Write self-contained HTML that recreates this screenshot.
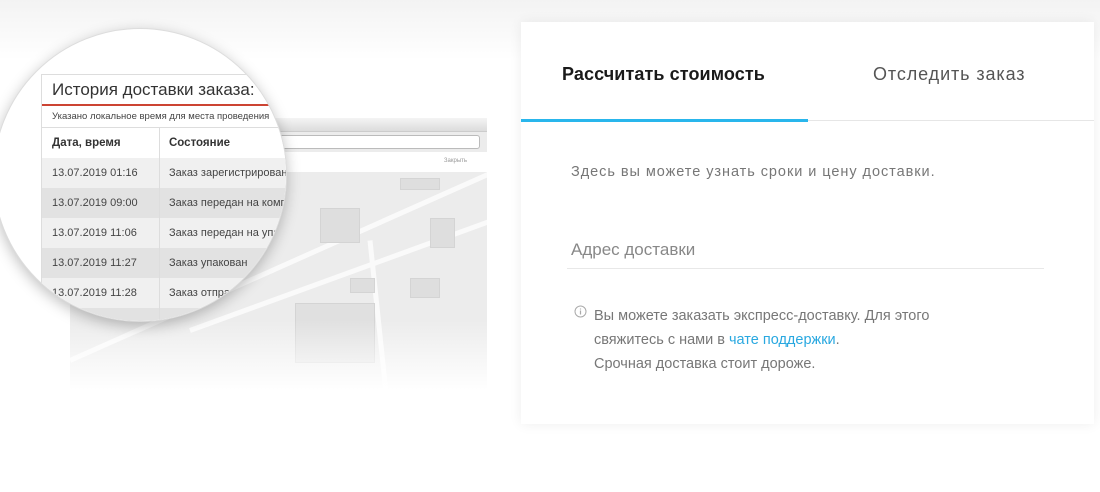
<!DOCTYPE html>
<html><head><meta charset="utf-8"><style>
*{margin:0;padding:0;box-sizing:border-box}
body{width:1100px;height:492px;overflow:hidden;background:linear-gradient(#f3f3f3 0,#fff 60px);font-family:"Liberation Sans","Noto Sans CJK SC",sans-serif;position:relative}
.map{position:absolute;left:70px;top:118px;width:417px;height:272px;background:#ececec;overflow:hidden}
.map .bar{height:14px;background:linear-gradient(#f4f4f4,#dcdcdc);border-bottom:1px solid #ccc}
.map .url{position:absolute;left:150px;top:17px;width:260px;height:14px;border:1px solid #bbb;border-radius:3px;background:#fff}
.map .top{position:absolute;left:0;top:34px;width:100%;height:20px;background:#fff;font-size:6px;color:#999;text-align:right;padding:6px 20px}
.map .fade{position:absolute;left:0;bottom:0;width:100%;height:70px;background:linear-gradient(rgba(255,255,255,0),#fff)}
.blk{position:absolute;background:#dedede;border:1px solid #d4d4d4}
.road{position:absolute;background:#fafafa;height:5px;transform-origin:left center}
.lens{position:absolute;left:-7px;top:28px;width:294px;height:294px;border-radius:50%;background:#fff;overflow:hidden;box-shadow:0 4px 14px rgba(0,0,0,.25);border:1px solid #ddd}
.tbl{position:absolute;left:47px;top:45px;width:300px;border:1px solid #ddd;background:#fff;font-size:11px;color:#444}
.tbl h3{font-weight:normal;font-size:17px;color:#333;padding:5px 10px 4px;border-bottom:2px solid #c43;white-space:nowrap}
.tbl .sub{font-size:9.5px;padding:5px 10px;border-bottom:1px solid #ddd;white-space:nowrap}
.row{display:flex;height:30px;align-items:center;white-space:nowrap}
.row div:first-child{width:118px;padding-left:10px;border-right:1px solid #ddd;height:100%;display:flex;align-items:center}
.row div:last-child{padding-left:9px}
.hd{font-weight:bold;font-size:11.5px;color:#333}
.g{background:#e2e2e2}.l{background:#f0f0f0}
.card{position:absolute;left:521px;top:22px;width:573px;height:402px;background:#fff;box-shadow:0 0 12px rgba(0,0,0,.07)}
.tab{position:absolute;top:42px;font-size:18px;color:#222}
.line{position:absolute;top:98px;left:0;width:100%;height:1px;background:#e6e6e6}
.blue{position:absolute;top:97px;left:0;width:287px;height:3px;background:#29b6ec}
.t{position:absolute;left:50px;font-size:14.5px;color:#777}
</style></head><body>
<div class="map">
<div class="bar"></div><div class="url"></div><div class="top">Закрыть</div>
<div class="road" style="left:0;top:240px;width:500px;transform:rotate(-24deg)"></div>
<div class="road" style="left:120px;top:210px;width:400px;transform:rotate(-20deg)"></div>
<div class="road" style="left:300px;top:120px;width:200px;transform:rotate(84deg)"></div>
<div class="blk" style="left:250px;top:90px;width:40px;height:35px"></div>
<div class="blk" style="left:225px;top:185px;width:80px;height:60px;background:#e0e0e0"></div>
<div class="blk" style="left:340px;top:160px;width:30px;height:20px"></div>
<div class="blk" style="left:360px;top:100px;width:25px;height:30px"></div>
<div class="blk" style="left:330px;top:60px;width:40px;height:12px"></div>
<div class="blk" style="left:280px;top:160px;width:25px;height:15px"></div>
<div class="fade"></div>
</div>
<div class="lens"><div class="tbl">
<h3>История доставки заказа:</h3>
<div class="sub">Указано локальное время для места проведения</div>
<div class="row hd"><div>Дата, время</div><div>Состояние</div></div>
<div class="row l"><div>13.07.2019 01:16</div><div>Заказ зарегистрирован</div></div>
<div class="row g"><div>13.07.2019 09:00</div><div>Заказ передан на комплектацию</div></div>
<div class="row l"><div>13.07.2019 11:06</div><div>Заказ передан на упаковку</div></div>
<div class="row g"><div>13.07.2019 11:27</div><div>Заказ упакован</div></div>
<div class="row l"><div>13.07.2019 11:28</div><div>Заказ отправлен</div></div>
<div class="row g"><div>&nbsp;</div><div></div></div>
</div></div>
<div class="card">
<div class="tab" style="left:41px;color:#1a1a1a;font-weight:bold;letter-spacing:0.1px">Рассчитать стоимость</div>
<div class="tab" style="left:352px;color:#555;letter-spacing:0.9px">Отследить заказ</div>
<div class="line"></div><div class="blue"></div>
<div class="t" style="top:142px;letter-spacing:0.95px">Здесь вы можете узнать сроки и цену доставки.</div>
<div class="t" style="top:218px;font-size:17px;color:#888">Адрес доставки</div>
<div style="position:absolute;left:46px;top:246px;width:477px;height:1px;background:#e8e8e8"></div>
<svg style="position:absolute;left:53px;top:283px" width="13" height="13" viewBox="0 0 13 13"><circle cx="6.5" cy="6.5" r="5.5" fill="none" stroke="#aaa"/><path d="M6.5 5.5v4M6.5 3.5v1" stroke="#aaa" stroke-width="1.2"/></svg>
<div class="t" style="left:73px;top:282px;line-height:24px">Вы можете заказать экспресс-доставку. Для этого<br>свяжитесь с нами в <span style="color:#29a8e0">чате поддержки</span>.<br>Срочная доставка стоит дороже.</div>
</div>
</body></html>
